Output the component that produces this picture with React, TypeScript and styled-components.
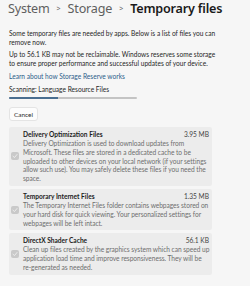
import React from "react";
import styled, { createGlobalStyle } from "styled-components";

const Global = createGlobalStyle`
  html, body { margin: 0; padding: 0; background: #f6f6f6; }
  body { font-family: "Lato", "Noto Sans", sans-serif; color: #1b1b1b; }
`;

const Page = styled.div`
  width: 250px;
  height: 286px;
  overflow: hidden;
  padding: 0 0 0 9px;
  box-sizing: border-box;
`;

const Breadcrumb = styled.div`
  display: flex;
  align-items: baseline;
  gap: 7px;
  height: 19px;
  margin-left: -1px;
  font-family: "Noto Sans", sans-serif;
  font-size: 12.6px;
  line-height: 18px;
  white-space: nowrap;
`;

const Crumb = styled.span<{ $current?: boolean }>`
  color: ${(p) => (p.$current ? "#1a1a1a" : "#5f5f5f")};
  font-weight: ${(p) => (p.$current ? 600 : 400)};
  letter-spacing: -0.2px;
`;

const Chevron = styled.span`
  font-size: 7px;
  color: #6a6a6a;
  position: relative;
  top: -2px;
`;

const Para = styled.p<{ $mt?: number }>`
  margin: ${(p) => p.$mt ?? 0}px 0 0 0;
  width: 210px;
  font-size: 6.6px;
  line-height: 9px;
  color: #262626;
`;

const Link = styled.div`
  margin-top: 4px;
  font-size: 6.6px;
  line-height: 9px;
  color: #2c5d8a;
`;

const Scanning = styled.div`
  margin-top: 4px;
  font-size: 6.6px;
  line-height: 9px;
  color: #262626;
`;

const Track = styled.div`
  margin-top: 3px;
  width: 128px;
  height: 2px;
  background: #c4c4c4;
  border-radius: 1px;
  overflow: hidden;
`;

const Fill = styled.div`
  height: 100%;
  background: #4a6e90;
`;

const CancelButton = styled.button`
  margin-top: 8px;
  width: 29px;
  height: 14px;
  padding: 0;
  border: 1px solid #e4e4e4;
  border-radius: 3px;
  background: #fdfdfd;
  font-family: inherit;
  font-size: 6.4px;
  color: #2a2a2a;
  display: block;
`;

const List = styled.div`
  margin-top: 6px;
  display: flex;
  flex-direction: column;
  gap: 3px;
  width: 203px;
`;

const Card = styled.div`
  background: #ececec;
  border-radius: 2px;
  display: flex;
  align-items: center;
  padding: 3px 1px 3px 2px;
`;

const Check = styled.div`
  width: 8px;
  height: 8px;
  flex: none;
  border-radius: 2px;
  background: #c9c9c9;
  display: flex;
  align-items: center;
  justify-content: center;
  margin-right: 4px;
`;

const Body = styled.div`
  flex: 1;
  display: flex;
  flex-direction: column;
`;

const Head = styled.div`
  display: flex;
  justify-content: space-between;
  font-size: 6.6px;
  line-height: 9px;
  padding-right: 2px;
`;

const Title = styled.span`
  font-weight: 700;
  color: #1c1c1c;
`;

const Size = styled.span`
  color: #444;
`;

const Desc = styled.div`
  font-size: 6.6px;
  line-height: 8.8px;
  color: #6e6e6e;
  letter-spacing: -0.03px;
`;

const items = [
  {
    title: "Delivery Optimization Files",
    size: "3.95 MB",
    desc: "Delivery Optimization is used to download updates from Microsoft. These files are stored in a dedicated cache to be uploaded to other devices on your local network (if your settings allow such use). You may safely delete these files if you need the space.",
  },
  {
    title: "Temporary Internet Files",
    size: "1.35 MB",
    desc: "The Temporary Internet Files folder contains webpages stored on your hard disk for quick viewing. Your personalized settings for webpages will be left intact.",
  },
  {
    title: "DirectX Shader Cache",
    size: "56.1 KB",
    desc: "Clean up files created by the graphics system which can speed up application load time and improve responsiveness. They will be re-generated as needed.",
  },
];

function CheckIcon() {
  return (
    <svg width="6" height="6" viewBox="0 0 12 12">
      <path d="M2 6.5 L5 9 L10 3" fill="none" stroke="#f4f4f4" strokeWidth="1.6" strokeLinecap="round" strokeLinejoin="round" />
    </svg>
  );
}

export default function App() {
  return (
    <Page>
      <Global />
      <Breadcrumb>
        <Crumb>System</Crumb>
        <Chevron>&gt;</Chevron>
        <Crumb>Storage</Crumb>
        <Chevron>&gt;</Chevron>
        <Crumb $current>Temporary files</Crumb>
      </Breadcrumb>
      <Para $mt={10}>Some temporary files are needed by apps. Below is a list of files you can remove now.</Para>
      <Para $mt={3}>
        Up to 56.1 KB may not be reclaimable. Windows reserves some storage to ensure proper performance and successful updates of your device.
      </Para>
      <Link>Learn about how Storage Reserve works</Link>
      <Scanning>Scanning: Language Resource Files</Scanning>
      <Track>
        <Fill style={{ width: "38%" }} />
      </Track>
      <CancelButton>Cancel</CancelButton>
      <List>
        {items.map((it) => (
          <Card key={it.title}>
            <Check>
              <CheckIcon />
            </Check>
            <Body>
              <Head>
                <Title>{it.title}</Title>
                <Size>{it.size}</Size>
              </Head>
              <Desc>{it.desc}</Desc>
            </Body>
          </Card>
        ))}
      </List>
    </Page>
  );
}
